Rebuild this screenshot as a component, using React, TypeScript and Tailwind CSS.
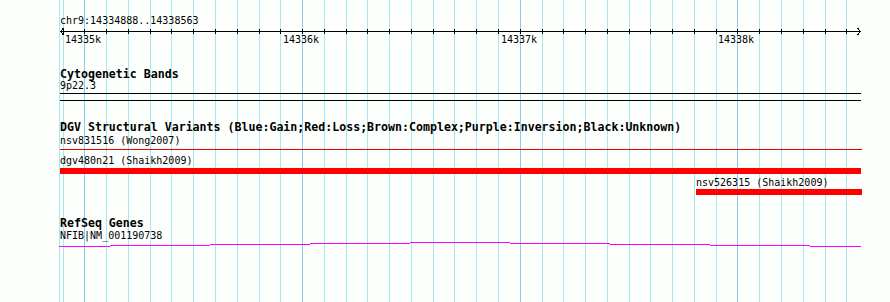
import React from 'react';

const START = 14334888;
const END = 14338563;
const X0 = 60;
const PX = 800 / (END - START);
const toX = (p: number) => Math.round(X0 + (p - START) * PX);

const ticks: number[] = [];
for (let p = 14334900; p <= 14338500; p += 100) ticks.push(p);
const majors = ticks.filter((p) => p % 1000 === 0);

// stepped gene line: [x1, x2, y]
const geneSegments: [number, number, number][] = [
  [59, 110, 4],
  [110, 210, 3],
  [210, 310, 2],
  [310, 410, 1],
  [410, 510, 0],
  [510, 610, 1],
  [610, 710, 2],
  [710, 810, 3],
  [810, 861, 4],
];

const Grid = () => (
  <svg className="absolute inset-0" width={890} height={302}>
    <rect x={59} y={0} width={1} height={302} fill="#a5e8ef" />
    {ticks.map((p) => (
      <rect
        key={p}
        x={toX(p)}
        y={0}
        width={1}
        height={302}
        fill={p % 1000 === 0 ? '#8ccbef' : '#a5e8ef'}
      />
    ))}
  </svg>
);

const Ruler = () => (
  <div className="relative h-[48px]">
    <svg className="absolute left-0 top-0" width={890} height={48}>
      <rect x={60} y={31} width={801} height={1} fill="#000" />
      {ticks.map((p) => (
        <rect key={p} x={toX(p)} y={29} width={1} height={5} fill="#000" />
      ))}
      <path d="M63.5 28 L60.5 31.5 L63.5 35" stroke="#000" strokeWidth={1} fill="none" shapeRendering="crispEdges" />
      <path d="M857.5 28 L860.5 31.5 L857.5 35" stroke="#000" strokeWidth={1} fill="none" shapeRendering="crispEdges" />
    </svg>
    <div className="relative pt-[15px] pl-[60px] text-[10px] leading-[12px]">chr9:14334888..14338563</div>
    {majors.map((p) => (
      <span
        key={p}
        className="absolute top-[34px] text-[10px] leading-[12px]"
        style={{ left: toX(p) - 19 }}
      >
        {p / 1000}k
      </span>
    ))}
  </div>
);

const Title = ({ children, className = '' }: { children: React.ReactNode; className?: string }) => (
  <div className={`pl-[60px] text-[11.6px] leading-[12px] font-bold ${className}`}>{children}</div>
);

const Label = ({ children, className = '' }: { children: React.ReactNode; className?: string }) => (
  <div className={`text-[10px] leading-[12px] whitespace-pre ${className}`}>{children}</div>
);

export default function App() {
  return (
    <div className="relative w-[890px] h-[302px] overflow-hidden bg-[#fcfffc] text-black font-['DejaVu_Sans_Mono','Liberation_Mono',monospace]">
      <Grid />
      <div className="relative">
        <Ruler />

        <Title className="mt-[20px]">Cytogenetic Bands</Title>
        <Label className="pl-[60px]">9p22.3</Label>
        <div className="mt-[1px] ml-[60px] w-[801px] h-px bg-black" />
        <div className="mt-[6px] ml-[60px] w-[801px] h-px bg-black" />

        <Title className="mt-[20px]">
          DGV Structural Variants (Blue:Gain;Red:Loss;Brown:Complex;Purple:Inversion;Black:Unknown)
        </Title>
        <Label className="mt-[2px] pl-[60px]">nsv831516 (Wong2007)</Label>
        <div className="mt-[2px] ml-[60px] w-[802px] h-px bg-[#e00000]" />
        <Label className="mt-[5px] pl-[60px]">dgv480n21 (Shaikh2009)</Label>
        <div className="mt-[1px] ml-[60px] w-[801px] h-[6px] bg-[#ff0000]" />
        <Label className="mt-[3px] pl-[696px]">nsv526315 (Shaikh2009)</Label>
        <div className="ml-[696px] w-[166px] h-[6px] bg-[#ff0000]" />

        <Title className="mt-[22px]">RefSeq Genes</Title>
        <Label className="mt-[1px] pl-[60px]">NFIB|NM_001190738</Label>
        <svg className="block" width={890} height={6}>
          {geneSegments.map(([x1, x2, y]) => (
            <rect key={x1} x={x1} y={y} width={x2 - x1} height={1} fill="#ff00ff" />
          ))}
        </svg>
      </div>
    </div>
  );
}
